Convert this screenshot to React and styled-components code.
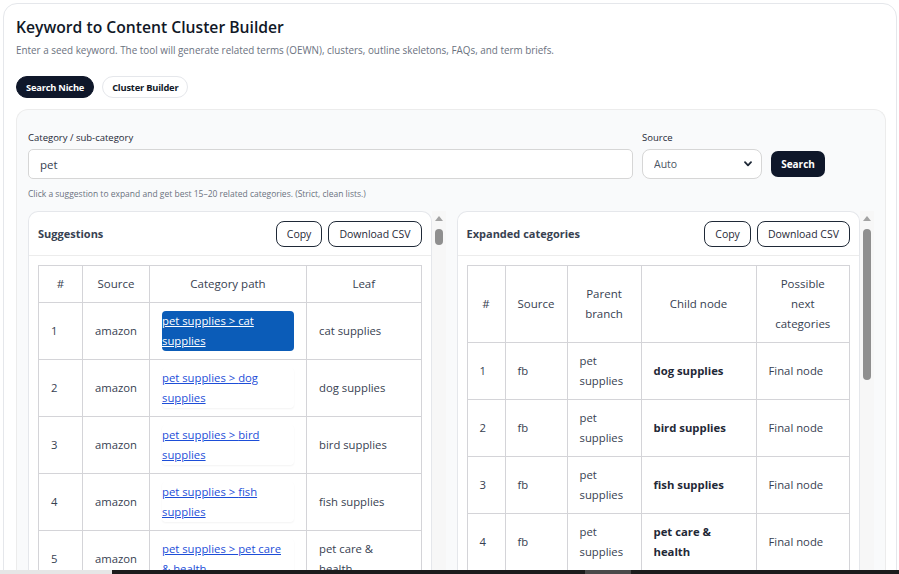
import React from "react"
import styled, { createGlobalStyle } from "styled-components"

const Global = createGlobalStyle`
html, body {
    margin: 0;
    height: 574px;
    overflow: hidden;
    background: #fff;
}
body {
    font-family: "Open Sans", "Noto Sans", sans-serif;
    color: #1f2937;
}
* { box-sizing: border-box; }
`

const Page = styled.div`
padding: 3px 2px 0 3px;
`

const Shell = styled.div`
border: 1px solid #e5e7eb;
border-radius: 14px;
padding: 11px 10px 0 12px;
background: #fff;
`

const Title = styled.h1`
margin: 0;
font-size: 15.7px;
font-weight: 600;
color: #111827;
line-height: 24px;
`

const Subtitle = styled.p`
margin: 4px 0 0;
font-size: 9.9px;
color: #6b7280;
line-height: 14px;
`

const Tabs = styled.div`
display: flex;
gap: 8px;
margin-top: 19px;
`

const Tab = styled.button`
font-family: inherit;
font-size: 9.3px;
font-weight: 700;
height: 22px;
padding: 0 9px;
border-radius: 11px;
border: 1px solid ${p => p.$active ? "#0f172a" : "#e5e7eb"};
background: ${p => p.$active ? "#0f172a" : "#fff"};
color: ${p => p.$active ? "#fff" : "#111827"};
letter-spacing: -0.2px;
`

const Panel = styled.div`
margin-top: 11px;
background: #f9fafb;
border: 1px solid #ececec;
border-bottom: none;
border-radius: 12px 12px 0 0;
padding: 21px 11px 0 11px;
`

const FieldGrid = styled.div`
display: grid;
grid-template-columns: 1fr 120px 54px;
column-gap: 9px;
row-gap: 4px;
align-items: center;
margin-right: 49px;
`

const Label = styled.label`
font-size: 9.5px;
font-weight: 500;
color: #1f2937;
line-height: 14px;
`

const TextInput = styled.input`
height: 30px;
border: 1px solid #d6d6d6;
border-radius: 5px;
padding: 0 11px;
font-family: inherit;
font-size: 11.5px;
color: #374151;
background: #fff;
outline: none;
`

const SelectWrap = styled.div`
position: relative;
height: 30px;
`

const Select = styled.select`
appearance: none;
width: 100%;
height: 30px;
border: 1px solid #d6d6d6;
border-radius: 8px;
padding: 0 11px;
font-family: inherit;
font-size: 10.5px;
color: #4b5563;
background: #fff;
`

const Chevron = styled.svg`
position: absolute;
right: 10px;
top: 12px;
pointer-events: none;
`

const SearchButton = styled.button`
height: 26px;
border: none;
border-radius: 7px;
background: #0f172a;
color: #fff;
font-family: inherit;
font-size: 10px;
font-weight: 700;
`

const Hint = styled.p`
margin: 9px 0 0;
font-size: 8.5px;
color: #6b7280;
line-height: 12px;
`

const Columns = styled.div`
display: grid;
grid-template-columns: 1fr 1fr;
gap: 11px;
margin-top: 11px;
height: 380px;
`

const Column = styled.div`
display: flex;
min-width: 0;
`

const Card = styled.section`
flex: 1;
min-width: 0;
background: #fff;
border: 1px solid #e5e7eb;
border-bottom: none;
border-radius: 10px 10px 0 0;
overflow: hidden;
`

const CardHead = styled.div`
display: flex;
align-items: center;
justify-content: space-between;
height: 44px;
padding: 0 9px;
border-bottom: 1px solid #ececec;
`

const CardTitle = styled.h2`
margin: 0;
font-size: 11px;
font-weight: 700;
color: #374151;
`

const Actions = styled.div`
display: flex;
gap: 6px;
`

const OutlineButton = styled.button`
height: 26px;
padding: 0 10px;
border: 1px solid #1f2937;
border-radius: 8px;
background: #fff;
font-family: inherit;
font-size: 10.5px;
color: #1f2937;
`

const TableBox = styled.div`
padding: 9px 9px 0;
`

const Table = styled.table`
width: 100%;
table-layout: fixed;
border-collapse: collapse;
font-size: 11.3px;
color: #374151;
line-height: 20px;

th, td {
    border: 1px solid #d4d4d8;
    padding: 8px 12px;
    vertical-align: middle;
}
th {
    font-weight: 500;
    text-align: center;
    font-size: 11.5px;
}
td { text-align: left; }
`

const PathLink = styled.a`
display: block;
border-radius: 4px;
padding-right: 5px;
color: ${p => p.$selected ? "#fff" : "#1d4ed8"};
background: ${p => p.$selected ? "#0b5cb8" : "#fff"};
box-shadow: ${p => p.$selected ? "none" : "0 1px 2px rgba(0,0,0,0.05)"};
text-decoration: underline;
font-size: 11.3px;
`

const Strong = styled.span`
font-weight: 700;
color: #1f2937;
`

const ScrollTrack = styled.div`
width: 14px;
display: flex;
flex-direction: column;
align-items: center;
padding-top: 5px;
background: #f7f7f7;
`

const ScrollArrow = styled.div`
width: 0;
height: 0;
border-left: 4px solid transparent;
border-right: 4px solid transparent;
border-bottom: 5px solid #a3a3a3;
`

const ScrollThumb = styled.div`
margin-top: 8px;
width: 8px;
border-radius: 4px;
background: #8f8f8f;
`

const Taskbar = styled.div`
position: fixed;
left: 0;
right: 0;
bottom: 0;
height: 4px;
display: flex;
`

const TaskSeg = styled.div`
width: ${p => p.$w}px;
flex: ${p => p.$w ? "none" : 1};
background: ${p => p.$c};
`

const suggestions = [
    "cat supplies",
    "dog supplies",
    "bird supplies",
    "fish supplies",
    "pet care & health",
    "small animal supplies",
    "reptile supplies",
]

const expanded = ["dog supplies", "bird supplies", "fish supplies", "pet care & health", "cat supplies"]

const Scrollbar = ({ thumb }) => (
    <ScrollTrack>
        <ScrollArrow />
        <ScrollThumb style={{ height: thumb }} />
    </ScrollTrack>
)

export default function App() {
    return (
        <Page>
            <Global />
            <Shell>
                <Title>Keyword to Content Cluster Builder</Title>
                <Subtitle>Enter a seed keyword. The tool will generate related terms (OEWN), clusters, outline skeletons, FAQs, and term briefs.</Subtitle>
                <Tabs>
                    <Tab $active>Search Niche</Tab>
                    <Tab>Cluster Builder</Tab>
                </Tabs>
                <Panel>
                    <FieldGrid>
                        <Label>Category / sub-category</Label>
                        <Label>Source</Label>
                        <span />
                        <TextInput defaultValue="pet" />
                        <SelectWrap>
                            <Select defaultValue="auto">
                                <option value="auto">Auto</option>
                                <option value="amazon">Amazon</option>
                                <option value="fb">Facebook</option>
                            </Select>
                            <Chevron width="8" height="6" viewBox="0 0 8 6">
                                <path d="M1 1.2 L4 4.4 L7 1.2" fill="none" stroke="#1f2937" strokeWidth="1.8" strokeLinecap="round" strokeLinejoin="round" />
                            </Chevron>
                        </SelectWrap>
                        <SearchButton>Search</SearchButton>
                    </FieldGrid>
                    <Hint>Click a suggestion to expand and get best 15–20 related categories. (Strict, clean lists.)</Hint>
                    <Columns>
                        <Column>
                            <Card>
                                <CardHead>
                                    <CardTitle>Suggestions</CardTitle>
                                    <Actions>
                                        <OutlineButton>Copy</OutlineButton>
                                        <OutlineButton>Download CSV</OutlineButton>
                                    </Actions>
                                </CardHead>
                                <TableBox>
                                    <Table>
                                        <colgroup>
                                            <col style={{ width: 44 }} />
                                            <col style={{ width: 67 }} />
                                            <col style={{ width: 157 }} />
                                            <col />
                                        </colgroup>
                                        <thead>
                                            <tr><th>#</th><th>Source</th><th>Category path</th><th>Leaf</th></tr>
                                        </thead>
                                        <tbody>
                                            {suggestions.map((leaf, i) => (
                                                <tr key={leaf}>
                                                    <td>{i + 1}</td>
                                                    <td>amazon</td>
                                                    <td><PathLink href="#" $selected={i === 0}>pet supplies &gt; {leaf}</PathLink></td>
                                                    <td>{leaf}</td>
                                                </tr>
                                            ))}
                                        </tbody>
                                    </Table>
                                </TableBox>
                            </Card>
                            <Scrollbar thumb={16} />
                        </Column>
                        <Column>
                            <Card>
                                <CardHead>
                                    <CardTitle>Expanded categories</CardTitle>
                                    <Actions>
                                        <OutlineButton>Copy</OutlineButton>
                                        <OutlineButton>Download CSV</OutlineButton>
                                    </Actions>
                                </CardHead>
                                <TableBox>
                                    <Table>
                                        <colgroup>
                                            <col style={{ width: 38 }} />
                                            <col style={{ width: 62 }} />
                                            <col style={{ width: 74 }} />
                                            <col style={{ width: 115 }} />
                                            <col />
                                        </colgroup>
                                        <thead>
                                            <tr><th>#</th><th>Source</th><th>Parent branch</th><th>Child node</th><th>Possible next categories</th></tr>
                                        </thead>
                                        <tbody>
                                            {expanded.map((child, i) => (
                                                <tr key={child}>
                                                    <td>{i + 1}</td>
                                                    <td>fb</td>
                                                    <td>pet supplies</td>
                                                    <td><Strong>{child}</Strong></td>
                                                    <td>Final node</td>
                                                </tr>
                                            ))}
                                        </tbody>
                                    </Table>
                                </TableBox>
                            </Card>
                            <Scrollbar thumb={151} />
                        </Column>
                    </Columns>
                </Panel>
            </Shell>
            <Taskbar>
                <TaskSeg $w={112} $c="#e6e6e6" />
                <TaskSeg $w={473} $c="#1c1c1c" />
                <TaskSeg $w={46} $c="#4a4a4a" />
                <TaskSeg $c="#1c1c1c" />
            </Taskbar>
        </Page>
    )
}
